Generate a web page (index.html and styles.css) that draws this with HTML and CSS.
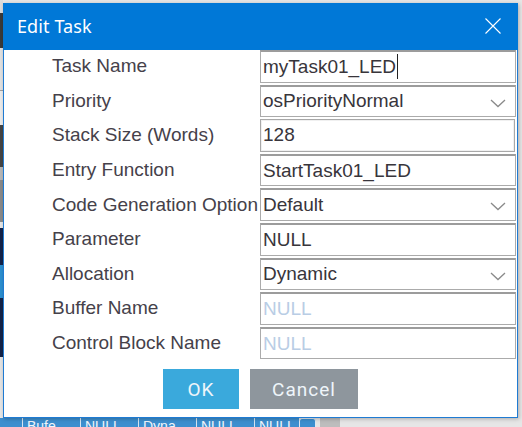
FILE: index.html
```html
<!DOCTYPE html>
<html>
<head>
<meta charset="utf-8">
<link rel="stylesheet" href="styles.css">
</head>
<body>
<div class="app">
  <div class="side">
    <div class="s s1"></div><div class="s s2"></div><div class="s s3"></div><div class="s s4"></div>
    <div class="s s5"></div><div class="s s6"></div><div class="s s7"></div><div class="s s8"></div>
    <div class="s s9"></div><div class="s s10"></div><div class="s s11"></div><div class="s s12"></div>
    <div class="s s13"></div>
  </div>
  <div class="tablerow">
    <span class="cell c0"></span>
    <span class="cell">Bufe</span>
    <span class="cell">NULL</span>
    <span class="cell">Dyna</span>
    <span class="cell">NULL</span>
    <span class="cell c5">NULL</span>
    <span class="cell cbox"></span>
    <span class="cell cgray"></span>
  </div>
</div>

<div class="dialog">
  <div class="titlebar">
    <span class="title">Edit Task</span>
    <svg class="close" width="16" height="16" viewBox="0 0 16 16"><path d="M0.5 0.5 L15.5 15.5 M15.5 0.5 L0.5 15.5" stroke="#fff" stroke-width="1.1" fill="none"/></svg>
  </div>
  <div class="form">
    <div class="label">Task Name</div>
    <div class="field"><span class="val">myTask01_LED</span><span class="caret"></span></div>

    <div class="label">Priority</div>
    <div class="field select"><span class="val">osPriorityNormal</span><svg class="chev" width="16" height="9" viewBox="0 0 16 9"><path d="M1 1 L8 7.5 L15 1" stroke="#8a8a8a" stroke-width="1.3" fill="none"/></svg></div>

    <div class="label">Stack Size (Words)</div>
    <div class="field focus"><span class="val">128</span></div>

    <div class="label">Entry Function</div>
    <div class="field"><span class="val">StartTask01_LED</span></div>

    <div class="label">Code Generation Option</div>
    <div class="field select"><span class="val">Default</span><svg class="chev" width="16" height="9" viewBox="0 0 16 9"><path d="M1 1 L8 7.5 L15 1" stroke="#8a8a8a" stroke-width="1.3" fill="none"/></svg></div>

    <div class="label">Parameter</div>
    <div class="field"><span class="val">NULL</span></div>

    <div class="label">Allocation</div>
    <div class="field select"><span class="val">Dynamic</span><svg class="chev" width="16" height="9" viewBox="0 0 16 9"><path d="M1 1 L8 7.5 L15 1" stroke="#8a8a8a" stroke-width="1.3" fill="none"/></svg></div>

    <div class="label">Buffer Name</div>
    <div class="field"><span class="val ph">NULL</span></div>

    <div class="label">Control Block Name</div>
    <div class="field"><span class="val ph">NULL</span></div>
  </div>
  <div class="buttons">
    <div class="btn ok">OK</div>
    <div class="btn cancel">Cancel</div>
  </div>
</div>
</body>
</html>
```

FILE: styles.css
```css
html, body {
  margin: 0;
  padding: 0;
}
body {
  width: 522px;
  height: 427px;
  overflow: hidden;
  position: relative;
  background: #e9e9e9;
  font-family: "Liberation Sans", Arial, sans-serif;
}
.app {
  width: 522px;
  height: 427px;
  display: flex;
  flex-direction: column;
  justify-content: space-between;
  background: #e6e6e6;
}
.side {
  width: 3px;
  display: flex;
  flex-direction: column;
}
.s1 { height: 13px; background: #dcdcdc; }
.s2 { height: 35px; background: #3a3a3a; }
.s3 { height: 42px; background: #e2e2e2; border-bottom: 1px solid #a0a0a0; }
.s4 { height: 34px; background: #ececec; }
.s5 { height: 42px; background: #444444; }
.s6 { height: 13px; background: #b8b8b8; }
.s7 { height: 42px; background: #8a8a8a; }
.s8 { height: 6px; background: #e6e6e6; }
.s9 { height: 37px; background: #12224a; }
.s10 { height: 33px; background: #2c8fd0; }
.s11 { height: 59px; background: #122248; }
.s12 { height: 33px; background: #e4e4e4; }
.s13 { height: 0; }
.tablerow {
  height: 9px;
  display: flex;
  background: #e6e6e6;
  overflow: hidden;
}
.cell {
  height: 14px;
  box-sizing: border-box;
  background: #3d8fcf;
  color: #f2f6fa;
  font-size: 14px;
  line-height: 16px;
  padding-left: 4px;
  border-left: 1px solid #d8e6f2;
  width: 58px;
  overflow: hidden;
}
.c0 { width: 22px; border-left: none; }
.c5 { width: 45px; }
.cbox { width: 17px; background: #3d8fcf; border: 1px solid #dfe9f3; border-radius: 3px; }
.cgray { width: 20px; background: #bdbdbd; border-left: none; margin-left: 4px; }

.dialog {
  position: absolute;
  left: 3px;
  top: 3px;
  width: 515px;
  height: 415px;
  box-sizing: border-box;
  background: #ffffff;
  border: 1px solid #1f7bd3;
  border-top: none;
  box-shadow: 1px 1px 4px rgba(0,0,0,0.25);
  display: flex;
  flex-direction: column;
}
.titlebar {
  height: 47px;
  margin: 0 -1px;
  background: #0078d7;
  display: flex;
  align-items: center;
  justify-content: space-between;
  padding: 0 17px 0 14px;
  flex-shrink: 0;
}
.title {
  color: #ffffff;
  font-family: "Noto Sans", "Open Sans", sans-serif;
  font-size: 18px;
  letter-spacing: 0.1px;
  margin-top: -1px;
}
.close {
  display: block;
  margin-top: -2px;
}
.form {
  display: grid;
  grid-template-columns: 256px 256px;
  grid-auto-rows: 32.6px;
  row-gap: 2px;
}
.label {
  padding-left: 48px;
  color: #45414a;
  font-size: 19px;
  display: flex;
  align-items: center;
  white-space: nowrap;
  overflow: hidden;
}
.field {
  box-sizing: border-box;
  border: 1px solid #ababab;
  border-top: 2px solid #9c9c9c;
  display: flex;
  align-items: center;
  padding-left: 2px;
  position: relative;
}
.field.focus {
  border: 1px solid #a8a8a8;
  margin-right: 1px;
  box-shadow: inset 0 0 0 1px #f0f0f0;
}
.val {
  color: #38353b;
  font-size: 19px;
  white-space: nowrap;
}
.val.ph {
  color: #b9cde5;
}
.caret {
  width: 1px;
  height: 25px;
  background: #222;
  margin-left: 1px;
}
.chev {
  position: absolute;
  right: 9px;
  top: 12px;
}
.buttons {
  display: flex;
  gap: 11px;
  padding-left: 159px;
  margin-top: 10px;
}
.btn {
  height: 40px;
  display: flex;
  align-items: center;
  justify-content: center;
  color: #eef5fa;
  font-family: Roboto, "Noto Sans", sans-serif;
  font-size: 19px;
  letter-spacing: 1px;
}
.ok {
  width: 76px;
  background: #3aa9dc;
}
.cancel {
  width: 108px;
  background: #8e969d;
}
```
